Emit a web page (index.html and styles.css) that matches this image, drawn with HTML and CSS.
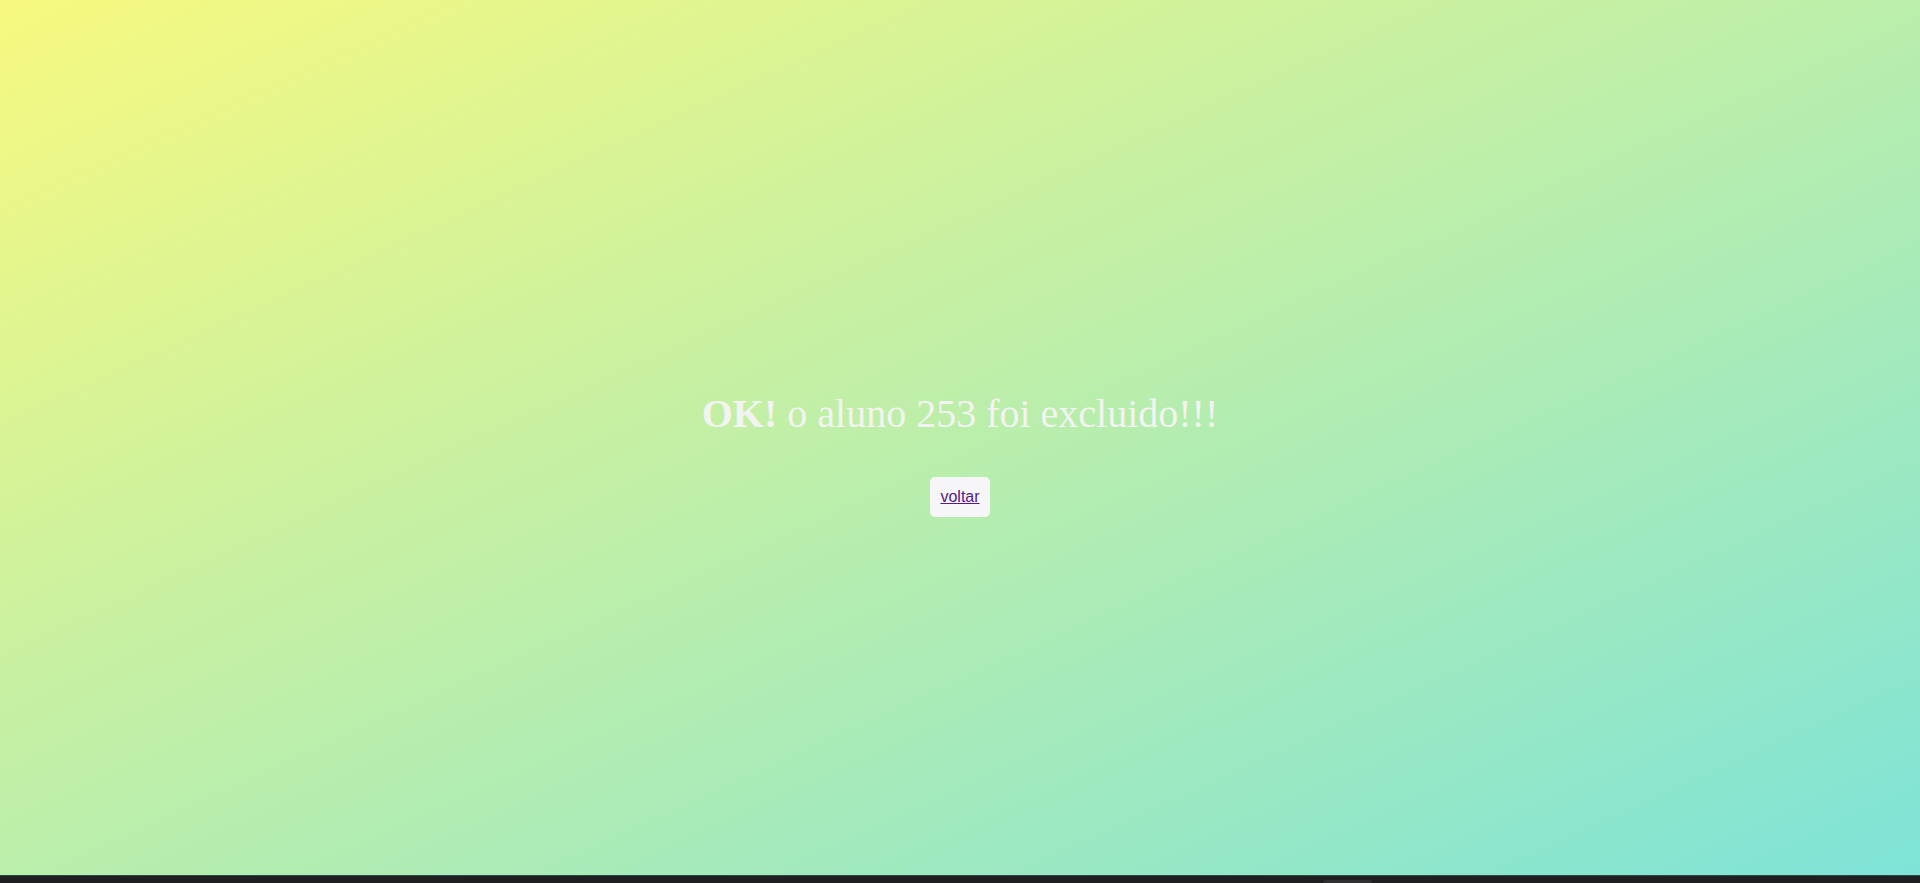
FILE: index.html
```html
<!DOCTYPE html>
<html lang="pt">
<head>
<meta charset="utf-8">
<title>Excluído</title>
<link rel="stylesheet" href="styles.css">
</head>
<body>
<main class="page">
  <h1 class="msg"><strong>OK!</strong> o aluno 253 foi excluido!!!</h1>
  <a class="back" href="#">voltar</a>
</main>
<div class="bottom-bar"><span class="thumb"></span></div>
</body>
</html>
```

FILE: styles.css
```css
html, body {
  margin: 0;
  padding: 0;
}
body {
  background: #1f1f21;
  overflow: hidden;
}
.page {
  height: 875px;
  box-sizing: border-box;
  padding-top: 31px;
  display: flex;
  flex-direction: column;
  align-items: center;
  justify-content: center;
  background: linear-gradient(to bottom right, #f7f97f, #7ee3d7);
}
.msg {
  margin: 0 0 40px;
  font-family: "Liberation Serif", "Times New Roman", serif;
  font-size: 40px;
  font-weight: normal;
  color: #f3f3f1;
}
.msg strong {
  font-weight: bold;
}
.back {
  display: block;
  padding: 11px 10px;
  background: #f6f6f8;
  border-radius: 5px;
  font-family: "Liberation Sans", Arial, sans-serif;
  font-size: 16px;
  line-height: 18px;
  color: #551a8b;
}
.bottom-bar {
  height: 8px;
  background: #1f1f21;
  border-top: 1px solid #2c4a44;
  box-sizing: border-box;
  position: relative;
}
.thumb {
  position: absolute;
  left: 1323px;
  top: 4px;
  width: 49px;
  height: 6px;
  border-radius: 3px;
  background: #303033;
}
```
